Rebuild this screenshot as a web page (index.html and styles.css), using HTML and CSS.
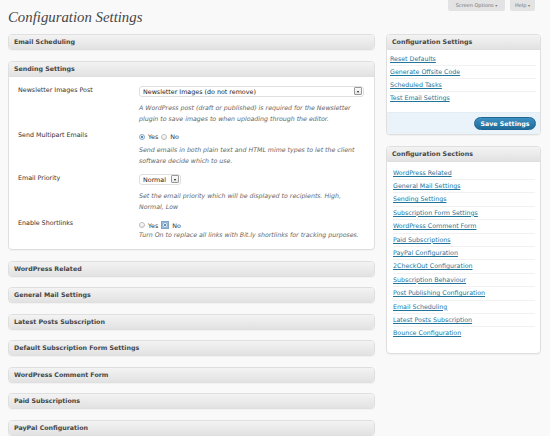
FILE: index.html
```html
<!DOCTYPE html>
<html>
<head>
<meta charset="utf-8">
<link rel="stylesheet" href="styles.css">
</head>
<body>
<div class="header">
  <h1 class="title">Configuration Settings</h1>
  <div class="tabs">
    <span class="tab tab-screen">Screen Options <span class="caret">▾</span></span>
    <span class="tab tab-help">Help <span class="caret">▾</span></span>
  </div>
</div>
<div class="main">
  <div class="left">
    <div class="postbox"><h3 class="hndle">Email Scheduling</h3></div>
    <div class="postbox">
      <h3 class="hndle hndle-open">Sending Settings</h3>
      <div class="inside">
        <div class="row">
          <div class="label">Newsletter Images Post</div>
          <div class="field">
            <div class="select select-wide"><span class="select-text">Newsletter Images (do not remove)</span><span class="arrow"></span></div>
            <p class="desc desc-after-select">A WordPress post (draft or published) is required for the Newsletter plugin to save images to when uploading through the editor.</p>
          </div>
        </div>
        <div class="row row-2">
          <div class="label">Send Multipart Emails</div>
          <div class="field">
            <div class="radios"><span class="radio checked"></span><span class="rlabel">Yes</span><span class="radio"></span><span class="rlabel">No</span></div>
            <p class="desc">Send emails in both plain text and HTML mime types to let the client software decide which to use.</p>
          </div>
        </div>
        <div class="row row-3">
          <div class="label">Email Priority</div>
          <div class="field">
            <div class="select select-small"><span class="select-text">Normal</span><span class="arrow"></span></div>
            <p class="desc desc-after-select">Set the email priority which will be displayed to recipients. High, Normal, Low</p>
          </div>
        </div>
        <div class="row row-4">
          <div class="label">Enable Shortlinks</div>
          <div class="field">
            <div class="radios radios-low"><span class="radio"></span><span class="rlabel">Yes</span><span class="focus"><span class="radio checked"></span></span><span class="rlabel">No</span></div>
            <p class="desc desc-tight">Turn On to replace all links with Bit.ly shortlinks for tracking purposes.</p>
          </div>
        </div>
      </div>
    </div>
    <div class="postbox"><h3 class="hndle">WordPress Related</h3></div>
    <div class="postbox"><h3 class="hndle">General Mail Settings</h3></div>
    <div class="postbox"><h3 class="hndle">Latest Posts Subscription</h3></div>
    <div class="postbox"><h3 class="hndle">Default Subscription Form Settings</h3></div>
    <div class="postbox"><h3 class="hndle">WordPress Comment Form</h3></div>
    <div class="postbox"><h3 class="hndle">Paid Subscriptions</h3></div>
    <div class="postbox"><h3 class="hndle">PayPal Configuration</h3></div>
  </div>
  <div class="right">
    <div class="sidebox">
      <h3 class="hndle hndle-open">Configuration Settings</h3>
      <ul class="links links-a">
        <li><a href="#">Reset Defaults</a></li>
        <li><a href="#">Generate Offsite Code</a></li>
        <li><a href="#">Scheduled Tasks</a></li>
        <li><a href="#">Test Email Settings</a></li>
      </ul>
      <div class="actions"><span class="button">Save Settings</span></div>
    </div>
    <div class="sidebox">
      <h3 class="hndle hndle-open">Configuration Sections</h3>
      <ul class="links links-b">
        <li><a href="#">WordPress Related</a></li>
        <li><a href="#">General Mail Settings</a></li>
        <li><a href="#">Sending Settings</a></li>
        <li><a href="#">Subscription Form Settings</a></li>
        <li><a href="#">WordPress Comment Form</a></li>
        <li><a href="#">Paid Subscriptions</a></li>
        <li><a href="#">PayPal Configuration</a></li>
        <li><a href="#">2CheckOut Configuration</a></li>
        <li><a href="#">Subscription Behaviour</a></li>
        <li><a href="#">Post Publishing Configuration</a></li>
        <li><a href="#">Email Scheduling</a></li>
        <li><a href="#">Latest Posts Subscription</a></li>
        <li><a href="#">Bounce Configuration</a></li>
      </ul>
    </div>
  </div>
</div>
</body>
</html>
```
FILE: styles.css
```css
html, body {
  margin: 0;
  padding: 0;
  background: #f9f9f9;
  font-family: "DejaVu Sans", Verdana, sans-serif;
  color: #333;
  overflow: hidden;
}

.header {
  display: flex;
  justify-content: space-between;
  align-items: flex-start;
  height: 34px;
  padding: 0 15px 0 8px;
}

.title {
  margin: 0;
  padding-top: 7px;
  font-family: "Liberation Serif", "Times New Roman", serif;
  font-style: italic;
  font-weight: normal;
  font-size: 14.8px;
  line-height: 20px;
  color: #464646;
}

.tabs {
  display: flex;
  gap: 5px;
}

.tab {
  display: block;
  height: 11px;
  line-height: 11px;
  background: #e3e3e3;
  color: #777;
  font-size: 5px;
  text-align: center;
  border-radius: 0 0 2px 2px;
}

.tab-screen { width: 57px; }
.tab-help { width: 25px; }

.caret { font-size: 4px; }

.main {
  display: flex;
  gap: 11px;
  padding: 0 9px 0 8px;
}

.left { width: 367px; flex: none; }
.right { width: 155px; flex: none; }

.postbox {
  border: 1px solid #dfdfdf;
  border-radius: 4px;
  background: #fff;
  margin-bottom: 10.5px;
  overflow: hidden;
  box-shadow: 0 1px 1px rgba(0,0,0,0.03);
}

.hndle {
  margin: 0;
  height: 14px;
  line-height: 14px;
  padding: 0 5px;
  font-size: 6.3px;
  font-weight: bold;
  color: #464646;
  background: linear-gradient(to bottom, #f3f3f3, #e2e2e2);
}

.hndle-open {
  border-bottom: 1px solid #dfdfdf;
}

.inside {
  padding: 9px 11px 9.5px 9px;
  display: flex;
  flex-direction: column;
}

.row {
  display: grid;
  grid-template-columns: 121px 1fr;
}

.row-2 { margin-top: 7.5px; }
.row-3 { margin-top: 8px; }
.row-4 { margin-top: 7px; }

.label {
  font-size: 6.35px;
  line-height: 8px;
  color: #333;
}

.field { min-width: 0; }

.select {
  box-sizing: border-box;
  height: 11px;
  border: 1px solid #dfdfdf;
  border-radius: 3px;
  background: #fff;
  display: flex;
  align-items: center;
  justify-content: space-between;
  padding: 0 1px 0 3px;
}

.select-wide { width: 225px; }
.select-small { width: 42px; }

.select-text {
  font-size: 6.35px;
  color: #222;
  line-height: 9px;
}

.arrow {
  box-sizing: border-box;
  width: 8px;
  height: 8px;
  border: 1px solid #999;
  border-radius: 1px;
  background: linear-gradient(#fafafa, #e6e6e6);
  position: relative;
  flex: none;
}

.arrow::after {
  content: "";
  position: absolute;
  left: 1.5px;
  top: 2.5px;
  border-left: 1.5px solid transparent;
  border-right: 1.5px solid transparent;
  border-top: 2px solid #222;
}

.desc {
  margin: 1.5px 0 0 0;
  font-size: 6.25px;
  line-height: 11px;
  font-style: italic;
  color: #666;
}

.desc-after-select { margin-top: 5px; }
.desc-tight { margin-top: -1px; }

.radios {
  display: flex;
  align-items: center;
  height: 11px;
  font-size: 6.35px;
  color: #333;
}

.radios-low { margin-top: 2px; height: 9px; }

.radio {
  box-sizing: border-box;
  width: 6px;
  height: 6px;
  border-radius: 50%;
  border: 1px solid #bbb;
  background: linear-gradient(#fff, #e8e8e8);
  flex: none;
  position: relative;
}

.radio.checked {
  border-color: #8aa9c4;
  background: #f0f5fa;
}

.radio.checked::after {
  content: "";
  position: absolute;
  left: 1px;
  top: 1px;
  width: 2px;
  height: 2px;
  border-radius: 50%;
  background: #2a6a99;
}

.rlabel {
  margin: 0 3px 0 3px;
  line-height: 11px;
}

.focus {
  display: flex;
  align-items: center;
  justify-content: center;
  width: 8px;
  height: 8px;
  background: #9fc0dc;
  border: 0.5px solid #7ea5c6;
  box-sizing: border-box;
}

.sidebox {
  border: 1px solid #dfdfdf;
  border-radius: 4px;
  background: #fff;
  margin-bottom: 11px;
  overflow: hidden;
  box-shadow: 0 1px 1px rgba(0,0,0,0.04);
}

.links {
  list-style: none;
  margin: 0;
  font-size: 6.3px;
}

.links li {
  border-bottom: 1px solid #f1f1f1;
}

.links-a {
  padding: 3px 4px 8px 3px;
}

.links-a li {
  line-height: 12px;
}

.links-a li:last-child { border-bottom: 0; }

.links-b {
  padding: 4.5px 5px 13px 6px;
}

.links-b li {
  line-height: 12.4px;
}

.links-b li:last-child { border-bottom: 0; }

.links a {
  color: #21759b;
  text-decoration: underline;
}

.actions {
  background: #eaf2fa;
  border-top: 1px solid #e4ecf4;
  display: flex;
  justify-content: flex-end;
  padding: 4px 4px 4px 4px;
}

.button {
  display: block;
  box-sizing: border-box;
  height: 13px;
  line-height: 11px;
  width: 62px;
  text-align: center;
  border: 1px solid #1f6590;
  border-radius: 7px;
  background: linear-gradient(to bottom, #3d90c3, #1f6b98);
  color: #fff;
  font-weight: bold;
  font-size: 6.3px;
}
```
